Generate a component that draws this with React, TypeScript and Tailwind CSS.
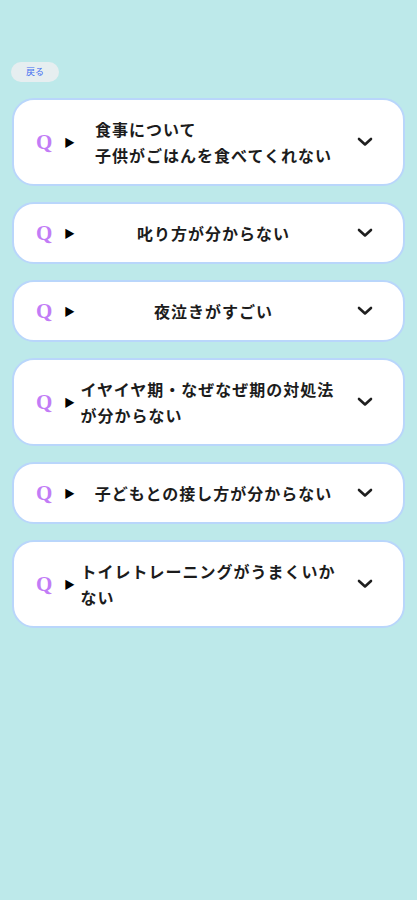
const questions: { id: number; lines: string[]; tall?: boolean }[] = [
  { id: 1, lines: ["食事について", "子供がごはんを食べてくれない"], tall: true },
  { id: 2, lines: ["叱り方が分からない"] },
  { id: 3, lines: ["夜泣きがすごい"] },
  { id: 4, lines: ["イヤイヤ期・なぜなぜ期の対処法が分からない"], tall: true },
  { id: 5, lines: ["子どもとの接し方が分からない"] },
  { id: 6, lines: ["トイレトレーニングがうまくいかない"], tall: true },
];

function Chevron() {
  return (
    <svg className="w-[16px] h-[10px]" viewBox="0 0 16 10" fill="none" stroke="#1f1f1f">
      <path d="M2 2l6 5.5L14 2" strokeWidth={2.6} strokeLinecap="round" strokeLinejoin="round" />
    </svg>
  );
}

function QuestionCard({ lines, tall }: { lines: string[]; tall?: boolean }) {
  return (
    <div
      className={`flex items-center bg-white border-2 border-[#b9d6fb] rounded-[22px] pl-[22px] pr-[30px] ${
        tall ? "h-[88px]" : "h-[62px]"
      }`}
    >
      <span className="w-[16px] text-[21px] leading-none font-bold text-[#c27cf6] [font-family:'Liberation_Serif',serif]">
        Q
      </span>
      <span className="ml-[12px] w-[14px] text-[11px] leading-none text-black">▶</span>
      <div className="flex-1 flex justify-center min-w-0">
        <p className="max-w-[266px] text-left text-[16px] leading-[26px] tracking-[1px] font-semibold text-[#1c1c1c] [font-family:'Noto_Sans_CJK_JP',sans-serif]">
          {lines.map((l, i) => (
            <span key={i}>
              {i > 0 && <br />}
              {l}
            </span>
          ))}
        </p>
      </div>
      <span className="ml-[8px] flex items-center">
        <Chevron />
      </span>
    </div>
  );
}

export default function App() {
  return (
    <div className="min-h-[900px] w-full bg-[#bde9ea] px-[12px] pt-[62px] [font-family:'Noto_Sans_CJK_JP',sans-serif]">
      <button className="ml-[-1px] h-[20px] w-[48px] rounded-full bg-[#e6eef0] text-[9px] text-[#3f6df0] flex items-center justify-center">
        戻る
      </button>
      <div className="mt-[16px] flex flex-col gap-[16px]">
        {questions.map((q) => (
          <QuestionCard key={q.id} lines={q.lines} tall={q.tall} />
        ))}
      </div>
    </div>
  );
}
